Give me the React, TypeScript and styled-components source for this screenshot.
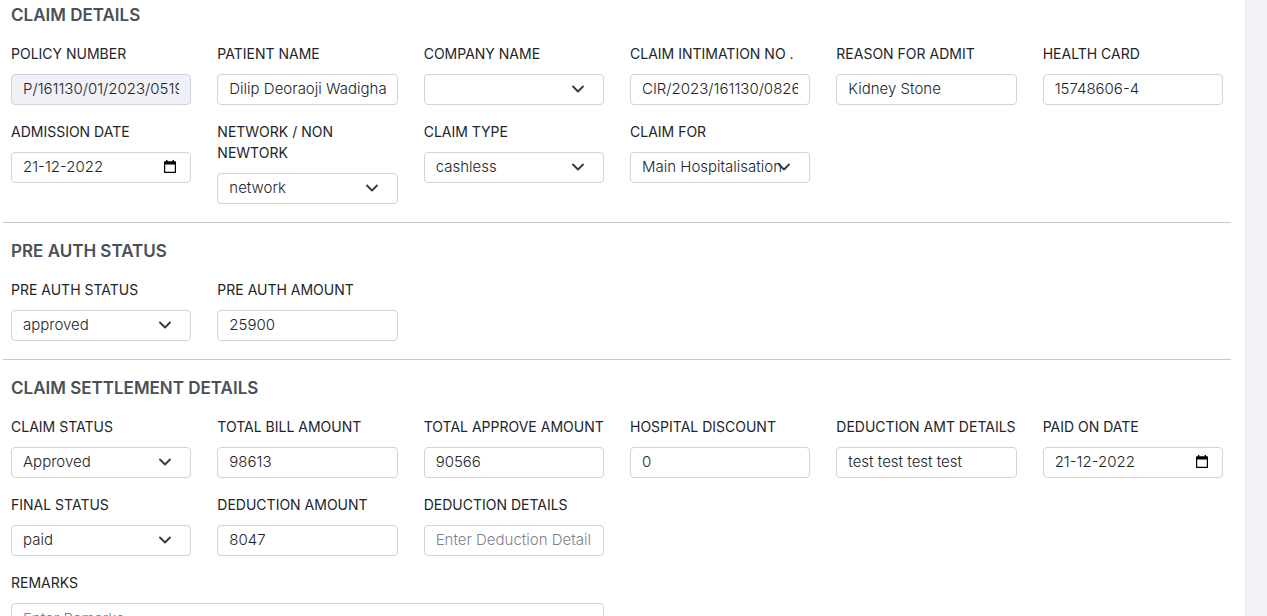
import React, { useId } from "react";
import styled, { createGlobalStyle, css } from "styled-components";

const GlobalStyle = createGlobalStyle`
  *, *::before, *::after { box-sizing: border-box; }
  body {
    margin: 0;
    background: #f3f2f9;
    color: #212529;
    font-family: Inter, "Liberation Sans", sans-serif;
    font-size: 14px;
    line-height: 21px;
  }
`;

const Card = styled.main`
  min-height: 100vh;
  margin-right: 21px;
  padding: 2px 22px 24px 11px;
  background: #fff;
  border-right: 1px solid #ebebf2;
`;

const Divider = styled.hr`
  height: 1px;
  margin: 18px -8px 15px;
  border: 0;
  background: #c8c8c8;
`;

const SectionTitle = styled.h2`
  margin: 0 0 14px;
  color: #495057;
  font-size: 17px;
  font-weight: 600;
  line-height: 27px;
`;

const FieldGrid = styled.div`
  display: grid;
  grid-template-columns: repeat(6, minmax(0, 1fr));
  align-items: start;
  gap: 16px 26px;
`;

const FieldBox = styled.div<{ $wide?: boolean }>`
  grid-column: ${({ $wide }) => ($wide ? "1 / span 3" : "auto")};
  display: flex;
  flex-direction: column;
  gap: 10px;
`;

const Label = styled.label`
  color: #212529;
  font-weight: 400;
`;

const controlStyle = css`
  display: block;
  width: 100%;
  height: 31px;
  margin: 0;
  padding: 0 11px 2px;
  border: 1px solid #ced4da;
  border-radius: 4px;
  background: #fff;
  color: #212529;
  font-family: inherit;
  font-size: 15px;
  font-weight: 300;
  line-height: 21px;
  outline: none;

  &:focus {
    border-color: #8f9bb3;
  }

  &::placeholder {
    color: #7d8090;
    opacity: 1;
  }
`;

const Input = styled.input`
  ${controlStyle}

  &:read-only {
    background: #f0f1f7;
  }
`;

const TextArea = styled.textarea`
  ${controlStyle}
  height: 72px;
  padding-top: 4px;
  resize: none;
`;

const Control = styled.div`
  position: relative;
`;

const Select = styled.select`
  ${controlStyle}
  padding-right: 22px;
  appearance: none;
`;

const Chevron = styled.svg`
  position: absolute;
  top: 9px;
  right: 18px;
  width: 16px;
  height: 12px;
  pointer-events: none;
`;

const CalendarButton = styled.button`
  position: absolute;
  top: 8px;
  right: 14px;
  display: flex;
  padding: 0;
  border: 0;
  background: none;
  cursor: pointer;
`;

type FieldProps = { label: string; value?: string; placeholder?: string; readOnly?: boolean };

function TextField({ label, value, placeholder, readOnly }: FieldProps) {
  const id = useId();
  return (
    <FieldBox>
      <Label htmlFor={id}>{label}</Label>
      <Input id={id} type="text" defaultValue={value} placeholder={placeholder} readOnly={readOnly} />
    </FieldBox>
  );
}

function DateField({ label, value }: FieldProps) {
  const id = useId();
  return (
    <FieldBox>
      <Label htmlFor={id}>{label}</Label>
      <Control>
        <Input id={id} type="text" inputMode="numeric" defaultValue={value} />
        <CalendarButton type="button" aria-label={`Open calendar for ${label}`}>
          <svg width="14" height="14" viewBox="0 0 14 14" aria-hidden="true">
            <path
              fill="#000"
              fillRule="evenodd"
              d="M3 0h1.4v1.2h5.2V0H11v1.2h1c.6 0 1 .4 1 1V12c0 .6-.4 1-1 1H2c-.6 0-1-.4-1-1V2.2c0-.6.4-1 1-1h1zM2.2 4.6v7.2h9.6V4.6z"
            />
          </svg>
        </CalendarButton>
      </Control>
    </FieldBox>
  );
}

function SelectField({ label, value = "" }: FieldProps) {
  const id = useId();
  return (
    <FieldBox>
      <Label htmlFor={id}>{label}</Label>
      <Control>
        <Select id={id} defaultValue={value}>
          <option value={value}>{value}</option>
        </Select>
        <Chevron viewBox="0 0 16 12" aria-hidden="true">
          <path
            d="M3 3.5l5 5 5-5"
            fill="none"
            stroke="#343a40"
            strokeWidth="1.9"
            strokeLinecap="round"
            strokeLinejoin="round"
          />
        </Chevron>
      </Control>
    </FieldBox>
  );
}

function RemarksField() {
  const id = useId();
  return (
    <FieldBox $wide>
      <Label htmlFor={id}>REMARKS</Label>
      <TextArea id={id} placeholder="Enter Remarks" />
    </FieldBox>
  );
}

export default function App() {
  return (
    <>
      <GlobalStyle />
      <Card>
        <section>
          <SectionTitle>CLAIM DETAILS</SectionTitle>
          <FieldGrid>
            <TextField label="POLICY NUMBER" value="P/161130/01/2023/05198" readOnly />
            <TextField label="PATIENT NAME" value="Dilip Deoraoji Wadigha" />
            <SelectField label="COMPANY NAME" />
            <TextField label="CLAIM INTIMATION NO ." value="CIR/2023/161130/08265" />
            <TextField label="REASON FOR ADMIT" value="Kidney Stone" />
            <TextField label="HEALTH CARD" value="15748606-4" />
            <DateField label="ADMISSION DATE" value="21-12-2022" />
            <SelectField label="NETWORK / NON NEWTORK" value="network" />
            <SelectField label="CLAIM TYPE" value="cashless" />
            <SelectField label="CLAIM FOR" value="Main Hospitalisation" />
          </FieldGrid>
        </section>
        <Divider />
        <section>
          <SectionTitle>PRE AUTH STATUS</SectionTitle>
          <FieldGrid>
            <SelectField label="PRE AUTH STATUS" value="approved" />
            <TextField label="PRE AUTH AMOUNT" value="25900" />
          </FieldGrid>
        </section>
        <Divider />
        <section>
          <SectionTitle>CLAIM SETTLEMENT DETAILS</SectionTitle>
          <FieldGrid>
            <SelectField label="CLAIM STATUS" value="Approved" />
            <TextField label="TOTAL BILL AMOUNT" value="98613" />
            <TextField label="TOTAL APPROVE AMOUNT" value="90566" />
            <TextField label="HOSPITAL DISCOUNT" value="0" />
            <TextField label="DEDUCTION AMT DETAILS" value="test test test test" />
            <DateField label="PAID ON DATE" value="21-12-2022" />
            <SelectField label="FINAL STATUS" value="paid" />
            <TextField label="DEDUCTION AMOUNT" value="8047" />
            <TextField label="DEDUCTION DETAILS" placeholder="Enter Deduction Details" />
            <RemarksField />
          </FieldGrid>
        </section>
      </Card>
    </>
  );
}
